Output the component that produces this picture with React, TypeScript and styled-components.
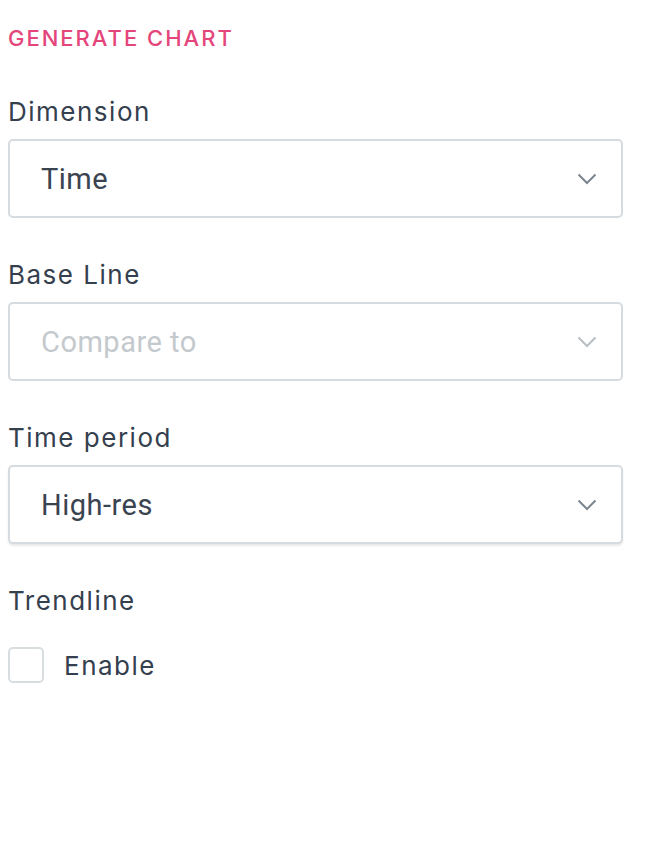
import React from "react";
import styled, { createGlobalStyle } from "styled-components";

const GlobalStyle = createGlobalStyle`
  body {
    margin: 0;
    background: #ffffff;
    font-family: "Inter", "Noto Sans", sans-serif;
  }
`;

const Panel = styled.div`
  display: flex;
  flex-direction: column;
  padding: 24px 25px 0 8px;
`;

const Title = styled.h2`
  margin: 0 0 44px 0;
  font-size: 22px;
  line-height: 28px;
  font-weight: 500;
  letter-spacing: 2px;
  color: #e4467c;
`;

const Field = styled.div`
  display: flex;
  flex-direction: column;
  gap: 11px;
  margin-bottom: 41px;
`;

const Label = styled.label`
  font-size: 26px;
  line-height: 32px;
  color: #35404e;
  letter-spacing: 1.5px;
`;

const SelectBox = styled.div<{ $raised?: boolean }>`
  display: flex;
  align-items: center;
  justify-content: space-between;
  height: 79px;
  box-sizing: border-box;
  padding: 0 24px 0 31px;
  border: 2px solid #d5dbdf;
  border-radius: 5px;
  background: #ffffff;
  box-shadow: ${(p) => (p.$raised ? "0 2px 2px rgba(60, 70, 80, 0.12)" : "none")};
`;

const Value = styled.span<{ $placeholder?: boolean }>`
  font-family: "Roboto", "Liberation Sans", sans-serif;
  font-size: 29px;
  letter-spacing: 0.5px;
  color: ${(p) => (p.$placeholder ? "#c4c9cd" : "#3a4350")};
`;

const Chevron = styled.svg`
  width: 20px;
  height: 12px;
`;

const CheckRow = styled.div`
  display: flex;
  align-items: center;
  gap: 20px;
  margin-top: 30px;
`;

const CheckBox = styled.span`
  width: 36px;
  height: 36px;
  box-sizing: border-box;
  border: 2px solid #d8dde0;
  border-radius: 5px;
`;

const CheckText = styled.span`
  font-size: 26px;
  color: #35404e;
  letter-spacing: 1.5px;
`;

function Select({
  value,
  placeholder,
  raised,
}: {
  value?: string;
  placeholder?: string;
  raised?: boolean;
}) {
  return (
    <SelectBox $raised={raised}>
      <Value $placeholder={!value}>{value || placeholder}</Value>
      <Chevron viewBox="0 0 20 12" fill="none">
        <path
          d="M1.5 1.5 L10 10 L18.5 1.5"
          stroke={value ? "#7d868e" : "#b9bfc4"}
          strokeWidth="2"
        />
      </Chevron>
    </SelectBox>
  );
}

export default function App() {
  return (
    <>
      <GlobalStyle />
      <Panel>
        <Title>GENERATE CHART</Title>

        <Field>
          <Label>Dimension</Label>
          <Select value="Time" />
        </Field>

        <Field>
          <Label>Base Line</Label>
          <Select placeholder="Compare to" />
        </Field>

        <Field>
          <Label>Time period</Label>
          <Select value="High-res" raised />
        </Field>

        <Label>Trendline</Label>
        <CheckRow>
          <CheckBox />
          <CheckText>Enable</CheckText>
        </CheckRow>
      </Panel>
    </>
  );
}
